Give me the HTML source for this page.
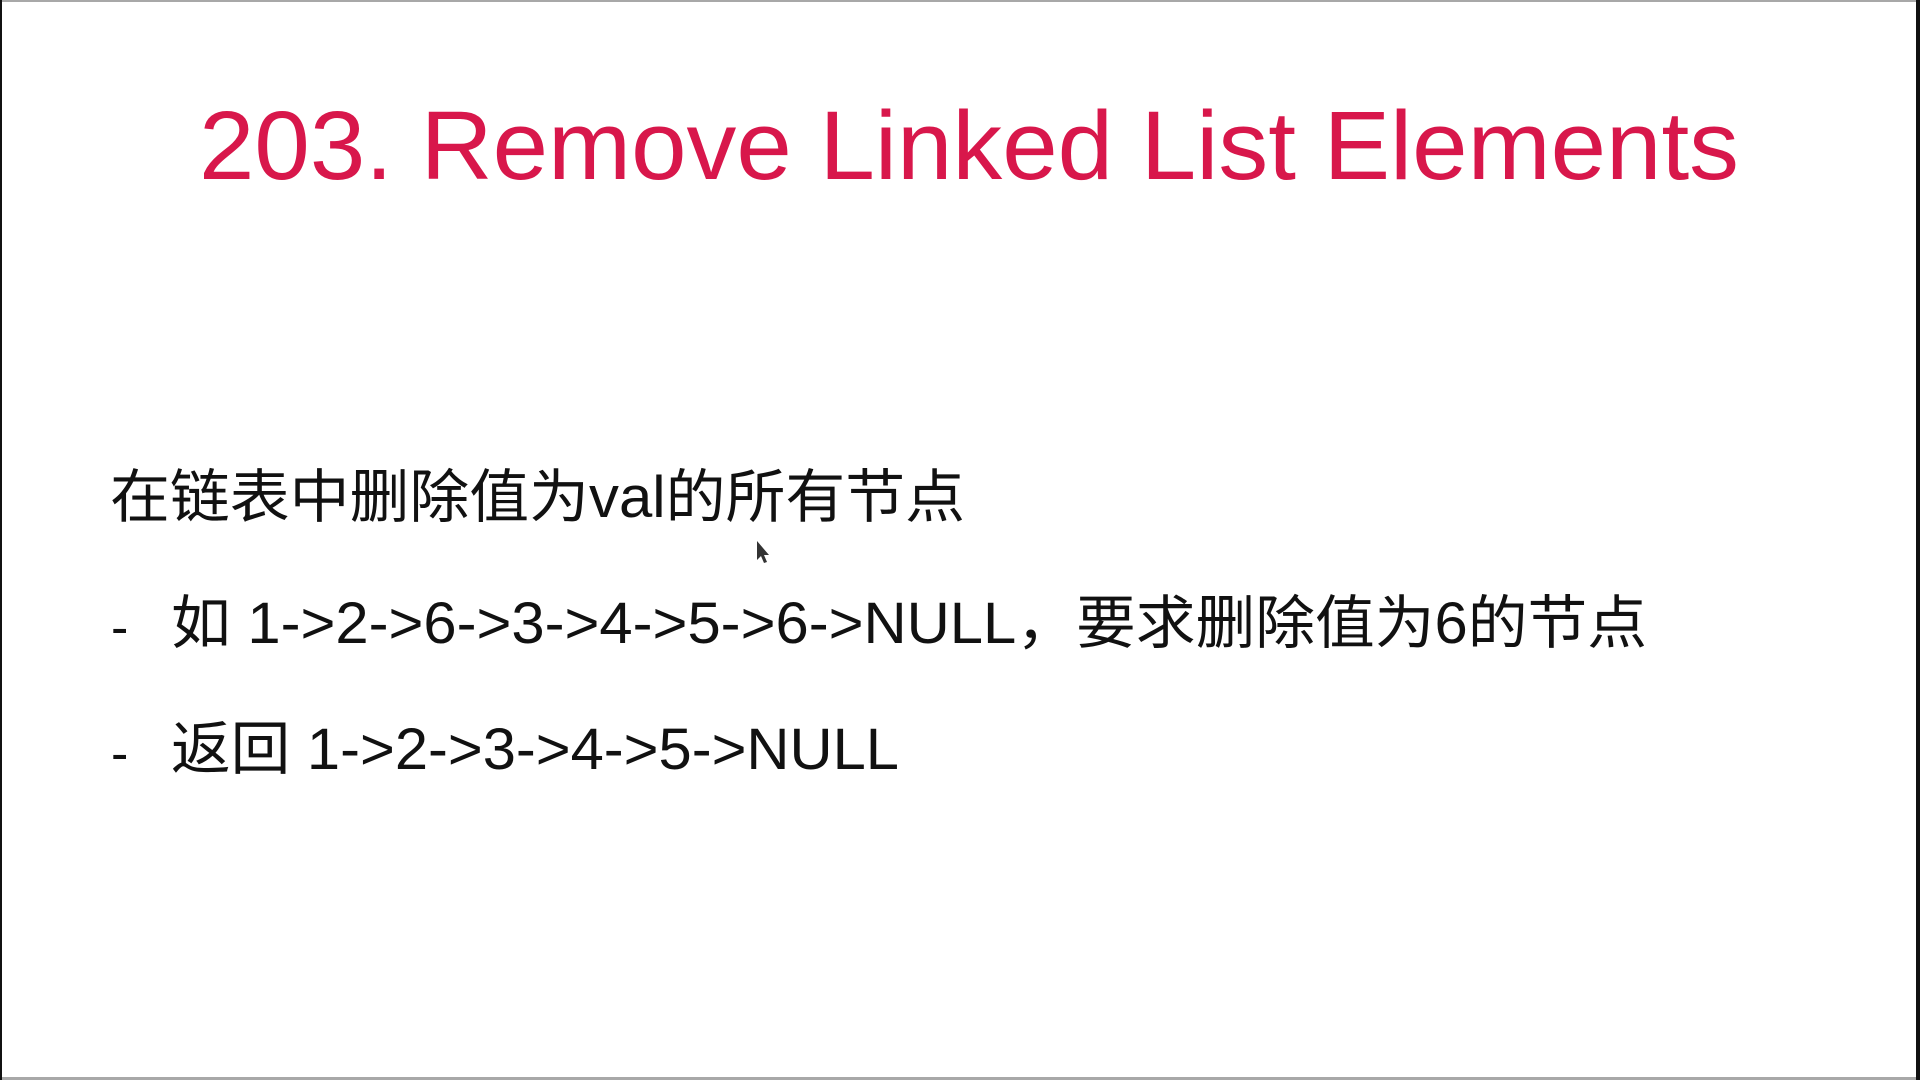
<!DOCTYPE html>
<html><head><meta charset="utf-8"><style>
html,body{margin:0;padding:0;width:1920px;height:1080px;overflow:hidden;background:#fff}
svg{display:block}
</style></head><body>
<svg width="1920" height="1080" viewBox="0 0 1920 1080" xmlns="http://www.w3.org/2000/svg">
<rect x="0" y="0" width="1920" height="1080" fill="#fff"/>
<rect x="0" y="0" width="1920" height="2" fill="#a8a8a8"/>
<rect x="0" y="1077" width="1920" height="3" fill="#a8a8a8"/>
<rect x="0" y="0" width="2" height="1080" fill="#111"/>
<rect x="1916" y="0" width="4" height="1080" fill="#111"/>
<text x="199" y="179" font-family="Liberation Sans, sans-serif" font-size="97" fill="#d8174b" textLength="1540" lengthAdjust="spacingAndGlyphs">203. Remove Linked List Elements</text>
<g font-family="Liberation Sans, Noto Sans CJK SC, sans-serif" font-size="58" fill="#111">
<text x="110" y="517" textLength="855" lengthAdjust="spacingAndGlyphs">在链表中删除值为val的所有节点</text>
<text x="111" y="645" font-size="52">-</text>
<text x="171" y="643" textLength="1476" lengthAdjust="spacingAndGlyphs">如 1-&gt;2-&gt;6-&gt;3-&gt;4-&gt;5-&gt;6-&gt;NULL，要求删除值为6的节点</text>
<text x="111" y="771" font-size="52">-</text>
<text x="171" y="769" textLength="728" lengthAdjust="spacingAndGlyphs">返回 1-&gt;2-&gt;3-&gt;4-&gt;5-&gt;NULL</text>
</g>
<path d="M757 541 L757 560 L761 556 L764 563 L767 562 L764 555 L769 555 Z" fill="#333"/>
</svg>
</body></html>
